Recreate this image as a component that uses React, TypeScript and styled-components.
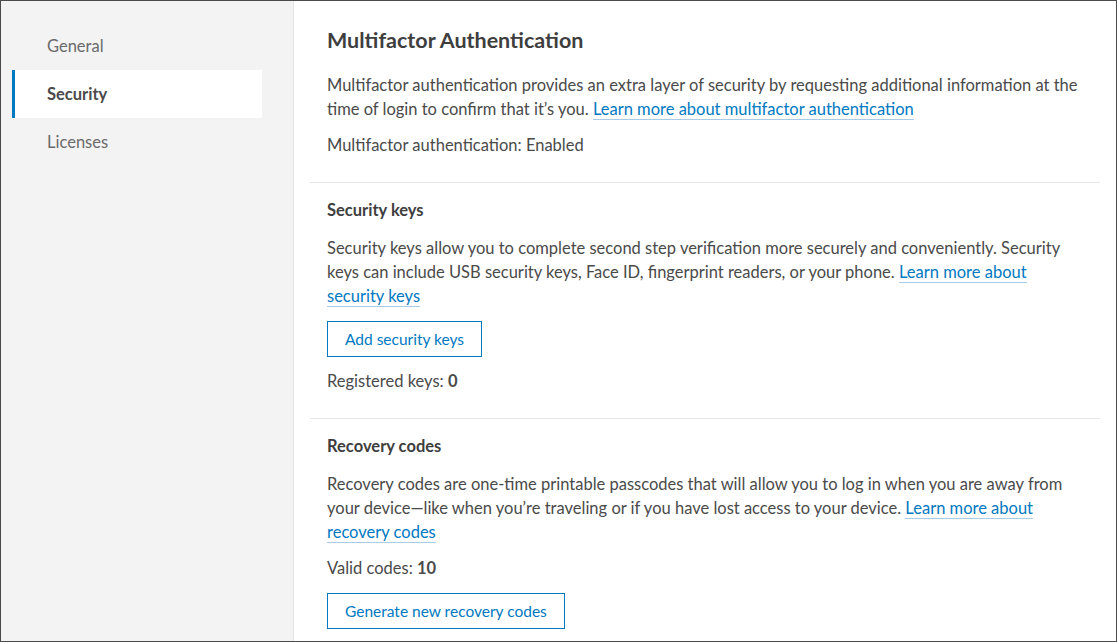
import React from "react";
import styled, { createGlobalStyle } from "styled-components";

const G = createGlobalStyle`
  html,body{margin:0;padding:0;}
  body{font-family:"Lato","Noto Sans",sans-serif;color:#4a4a4a;}
  *{box-sizing:border-box;}
`;
const Frame = styled.div`
  width:1117px;height:642px;border:1px solid #4a4a4a;display:flex;overflow:hidden;background:#fff;
`;
const Side = styled.nav`
  width:293px;flex:none;background:#f3f3f3;border-right:1px solid #e6e6e6;padding:21px 31px 0 11px;
  display:flex;flex-direction:column;
`;
const NavItem = styled.div<{ $active?: boolean }>`
  height:48px;display:flex;align-items:center;padding-left:32px;font-size:16.5px;
  color:${p => (p.$active ? "#4a4a4a" : "#6a6a6a")};font-weight:${p => (p.$active ? 700 : 400)};
  background:${p => (p.$active ? "#fff" : "transparent")};
  border-left:3px solid ${p => (p.$active ? "#0079c1" : "transparent")};
`;
const Main = styled.main`flex:1;padding:0 16px;`;
const Section = styled.section<{ $first?: boolean; $last?: boolean }>`
  padding:${p => (p.$first ? "22px" : "13px")} 17px ${p => (p.$last ? "0" : "25px")};
  border-bottom:${p => (p.$last ? "none" : "1px solid #e6e6e6")};
  display:flex;flex-direction:column;align-items:flex-start;
`;
const H1 = styled.h1`font-size:21.5px;font-weight:700;margin:4px 0 20px;color:#3e3e3e;`;
const H2 = styled.h2`font-size:16.5px;font-weight:700;margin:4px 0 16px;color:#3e3e3e;`;
const P = styled.p<{ $gap?: number }>`font-size:16.5px;line-height:24px;margin:0 0 ${p => p.$gap ?? 0}px;color:#4a4a4a;`;
const A = styled.a`color:#0079c1;text-decoration:none;border-bottom:1px solid #a9cbe6;`;
const Btn = styled.button<{ $after?: number }>`
  font-family:inherit;font-size:15.5px;color:#0079c1;background:#fff;border:1px solid #0079c1;
  height:36px;padding:0 17px;margin:13px 0 ${p => p.$after ?? 0}px;
`;

export default function App() {
  return (
    <>
      <G />
      <Frame>
        <Side>
          <NavItem>General</NavItem>
          <NavItem $active>Security</NavItem>
          <NavItem>Licenses</NavItem>
        </Side>
        <Main>
          <Section $first>
            <H1>Multifactor Authentication</H1>
            <P $gap={12}>Multifactor authentication provides an extra layer of security by requesting additional information at the time of login to confirm that it’s you. <A>Learn more about multifactor authentication</A></P>
            <P>Multifactor authentication: Enabled</P>
          </Section>
          <Section>
            <H2>Security keys</H2>
            <P>Security keys allow you to complete second step verification more securely and conveniently. Security keys can include USB security keys, Face ID, fingerprint readers, or your phone. <A>Learn more about security keys</A></P>
            <Btn $after={12}>Add security keys</Btn>
            <P>Registered keys: <b>0</b></P>
          </Section>
          <Section $last>
            <H2>Recovery codes</H2>
            <P $gap={12}>Recovery codes are one-time printable passcodes that will allow you to log in when you are away from your device—like when you’re traveling or if you have lost access to your device. <A>Learn more about recovery codes</A></P>
            <P>Valid codes: <b>10</b></P>
            <Btn>Generate new recovery codes</Btn>
          </Section>
        </Main>
      </Frame>
    </>
  );
}
